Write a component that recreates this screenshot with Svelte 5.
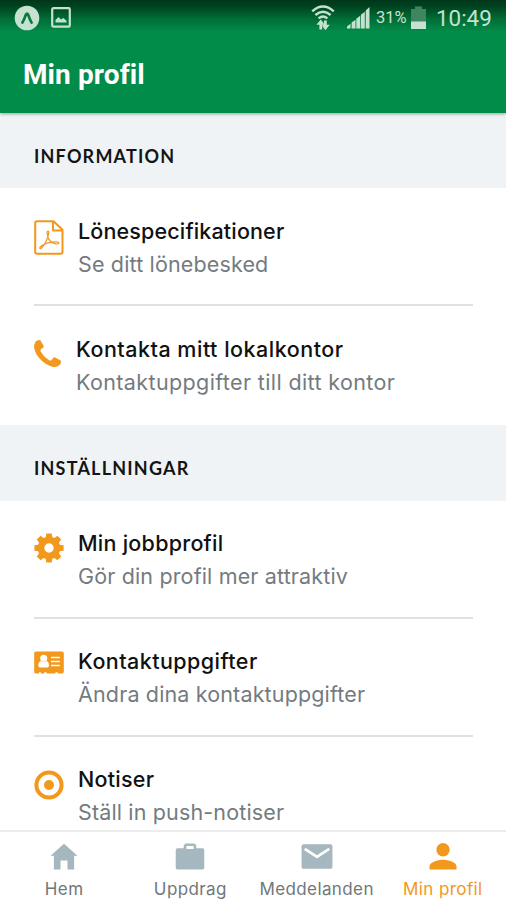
<script lang="ts">
  type Item = { icon: string; title: string; text: string };

  const sections: { heading: string; items: Item[] }[] = [
    {
      heading: 'INFORMATION',
      items: [
        { icon: 'pdf', title: 'Lönespecifikationer', text: 'Se ditt lönebesked' },
        { icon: 'phone', title: 'Kontakta mitt lokalkontor', text: 'Kontaktuppgifter till ditt kontor' },
      ],
    },
    {
      heading: 'INSTÄLLNINGAR',
      items: [
        { icon: 'cog', title: 'Min jobbprofil', text: 'Gör din profil mer attraktiv' },
        { icon: 'card', title: 'Kontaktuppgifter', text: 'Ändra dina kontaktuppgifter' },
        { icon: 'target', title: 'Notiser', text: 'Ställ in push-notiser' },
      ],
    },
  ];

  const tabs = [
    { id: 'home', label: 'Hem' },
    { id: 'jobs', label: 'Uppdrag' },
    { id: 'messages', label: 'Meddelanden' },
    { id: 'profile', label: 'Min profil' },
  ];

  let active = $state('profile');

  // eight teeth, one every 45 degrees
  const teeth = [0, 45, 90, 135, 180, 225, 270, 315];
</script>

<div class="app">
  <header>
    <div class="status">
      <svg class="expo" width="26" height="26" viewBox="0 0 26 26">
        <circle cx="13" cy="13" r="12.300" fill="#c5e2d0" />
        <path d="M8.400 17.600C10 15 11 12.200 12 9.400Q13 7.700 14 9.400C15 12.200 16 15 17.600 17.600" fill="none" stroke="#087a40" stroke-width="2.700" stroke-linecap="round" />
      </svg>
      <svg class="photo" width="20" height="21" viewBox="0 0 20 21">
        <rect x="1.200" y="1.200" width="17.600" height="18.400" rx="1.200" fill="none" stroke="#c5e2d0" stroke-width="2.200" />
        <path d="M4.500 15.500v-2.500l3-3 2.500 2.500 2.300-1.500 3.200 2.800v1.700z" fill="#c5e2d0" />
      </svg>
      <span class="spacer"></span>
      <svg class="wifi" width="24" height="27" viewBox="0 0 24 27" fill="none" stroke="#c5e2d0">
        <path d="M1.200 7.400Q12-2.200 22.800 7.400M4.400 11Q12 4.400 19.600 11M7.600 14.300Q12 10.600 16.400 14.300" stroke-width="2.400" />
        <path d="M9.800 25.500v-7M14.400 16.500v7" stroke-width="2.800" />
        <path d="M5.400 20.800l4.400-5.300 3 3.800v1.500zM18.800 20.800l-4.400 5.400-3-3.900v-1.500z" fill="#c5e2d0" stroke="none" />
      </svg>
      <svg class="signal" width="23" height="23" viewBox="0 0 23 23" fill="#c5e2d0">
        <path d="M0 22.500v-2l3.500-2.700v4.700zM4.600 22.500v-6l3.900-2.800v8.800zM9.300 22.500v-9.800l3.900-3v12.800zM13.900 22.500V8.700l3.900-3v16.800zM18.700 22.500V4.500L22.500 1v21.500z" />
      </svg>
      <span class="percent">31%</span>
      <svg class="battery" width="15" height="23" viewBox="0 0 15 23">
        <path d="M4 0.500h7v2.500h4V23H0V3h4z" fill="#3f8660" />
        <path d="M0 15.500h15V23H0z" fill="#c5e2d0" />
      </svg>
      <span class="clock">10:49</span>
    </div>
    <h1>Min profil</h1>
  </header>

  <main>
    {#each sections as section}
      <section>
        <h2>{section.heading}</h2>
        <ul>
          {#each section.items as item}
            <li class={item.icon}>
              <div class="icon">
                {#if item.icon === 'pdf'}
                  <svg width="30" height="35" viewBox="0 0 30 35" fill="none" stroke="#f2981c" stroke-linejoin="round">
                    <path d="M3 1.200h16.500l9 8.500V32q0 1.700-1.700 1.700H3Q1.200 33.700 1.200 32V3Q1.200 1.200 3 1.200z" stroke-width="2" />
                    <path d="M19 1.500v9h9.500" stroke-width="2" />
                    <path d="M14.200 11c-1.600 0-1.200 2.700-.3 6 .9 3 3 5.200 6.200 6.400 2.600.9 4.800.8 4.800-.3 0-1.400-3.800-1.600-8-.8-4.200.7-8.800 2.400-10.600 4.600-1.200 1.500-.2 2.300 1.100 1.100 2.300-2.100 4.800-6.500 6.200-10.500.9-3 1.700-6.500.6-6.500z" stroke-width="1.200" />
                  </svg>
                {:else if item.icon === 'phone'}
                  <svg width="27" height="27" viewBox="0 0 1408 1408">
                    <path fill="#f2981c" d="M1408 1112q0 27-10 70.500T1377 1251q-21 50-122 106-94 51-186 51-27 0-53-3.500t-57.500-12.500-47-14.500T856 1357t-49-18q-98-35-175-83-127-79-264-216T152 776q-48-77-83-175-3-9-18-49t-20.500-55.500T16 449.500 3.500 392 0 339q0-92 51-186Q107 52 157 31q25-11 68.500-21T296 0q14 0 21 3 18 6 53 76 11 19 30 54t35 63.500 31 53.500q3 4 17.500 25t21.500 35.500 7 28.500q0 20-28.500 50t-62 55-62 53-28.500 46q0 9 5 22.500t8.500 20.500 14 24 11.500 19q76 137 174 235t235 174q2 1 19 11.500t24 14 20.500 8.500 22.500 5q18 0 46-28.500t53-62 55-62 50-28.500q14 0 28.500 7t35.500 21.500 25 17.500q25 15 53.500 31t63.500 35 54 30q70 35 76 53 3 7 3 21z" />
                  </svg>
                {:else if item.icon === 'cog'}
                  <svg width="30" height="30" viewBox="-15 -15 30 30">
                    {#each teeth as angle}
                      <path d="M-3.600-8L-2.700-14.600H2.700L3.600-8z" fill="#f2981c" transform="rotate({angle})" />
                    {/each}
                    <circle r="8" fill="none" stroke="#f2981c" stroke-width="6.600" />
                  </svg>
                {:else if item.icon === 'card'}
                  <svg width="30" height="23" viewBox="0 0 30 23">
                    <path d="M2 .5h26q1.800 0 1.800 1.800v18.400q0 1.800-1.800 1.800h-4.200v-1.200h-2.300v1.200H12.500v-1.200h-2.300v1.200H6.900v-1.200H5v1.200H2Q.2 22.500.2 20.700V2.300Q.2.500 2 .500z" fill="#f2981c" />
                    <circle cx="9.700" cy="7.300" r="3.500" fill="#fff" />
                    <path d="M7 10q2.700 2 5.400 0 2.600.8 2.600 4.700 0 1.800-1.500 1.800H6q-1.700 0-1.700-1.800Q4.300 10.800 7 10z" fill="#fff" />
                    <path d="M17 6.600h8.800M17 10.600h8.800M17 14.600h8.800" stroke="#fff" stroke-width="1.500" />
                  </svg>
                {:else}
                  <svg width="30" height="30" viewBox="0 0 30 30">
                    <circle cx="15" cy="15" r="12.600" fill="none" stroke="#f2981c" stroke-width="4" />
                    <circle cx="15" cy="15" r="5" fill="#f2981c" />
                  </svg>
                {/if}
              </div>
              <div class="copy">
                <h3>{item.title}</h3>
                <p>{item.text}</p>
              </div>
            </li>
          {/each}
        </ul>
      </section>
    {/each}
  </main>

  <nav>
    {#each tabs as tab}
      <button class:active={active === tab.id} onclick={() => (active = tab.id)}>
        {#if tab.id === 'home'}
          <svg width="28" height="28" viewBox="0 0 28 28" fill="currentColor">
            <path d="M14 .8l14 12.500h-3.500V27.500h-6.900v-9.300h-7.200v9.300H3.500V13.300H0z" />
          </svg>
        {:else if tab.id === 'jobs'}
          <svg width="30" height="28" viewBox="0 0 30 28" fill="currentColor">
            <path fill-rule="evenodd" d="M8.500 5.500V2.300L10.300.5h9.400l1.800 1.800v3.200H28q1.800 0 1.800 1.800v18.400q0 1.800-1.800 1.800H2Q.2 27.500.2 25.700V7.300Q.2 5.500 2 5.500zM11.300 6.200h7.400V3h-7.400z" />
          </svg>
        {:else if tab.id === 'messages'}
          <svg width="32" height="28" viewBox="0 0 32 28" fill="currentColor">
            <rect y="1.300" width="32" height="25.500" rx="2" />
            <path d="M3.300 6L16 14.500 28.700 6" fill="none" stroke="#fff" stroke-width="2.800" />
          </svg>
        {:else}
          <svg width="28" height="28" viewBox="0 0 28 28" fill="currentColor">
            <circle cx="14" cy="7" r="6.900" />
            <path d="M0 27.500v-3.200c0-4.600 8.500-7 14-7s14 2.400 14 7v3.200z" />
          </svg>
        {/if}
        <span>{tab.label}</span>
      </button>
    {/each}
  </nav>
</div>

<style>
  :global(body) {
    margin: 0;
  }

  .app {
    display: flex;
    flex-direction: column;
    width: 506px;
    height: 900px;
    overflow: hidden;
    background: #fff;
    font-family: Inter, 'Liberation Sans', sans-serif;
  }

  header {
    flex: none;
    height: 113px;
    background: linear-gradient(#00361b 0, #00421f 6px, #007038 20px, #028c4a 32px);
    box-shadow: 0 1px 3px rgba(0, 0, 0, 0.35);
    z-index: 1;
    font-family: Roboto, sans-serif;
  }

  .status {
    display: flex;
    align-items: center;
    box-sizing: border-box;
    height: 35px;
    padding: 0 15px 0 14px;
    color: #c5e2d0;
  }

  .photo {
    margin-left: 11px;
  }

  .spacer {
    flex: 1;
  }

  .signal {
    margin-left: 12px;
  }

  .percent {
    width: 31px;
    margin-left: 6px;
    font-size: 16.5px;
    line-height: 36px;
    white-space: nowrap;
  }

  .battery {
    margin-left: 4px;
  }

  .clock {
    width: 55px;
    margin-left: 10px;
    font-size: 22.4px;
    line-height: 36px;
    white-space: nowrap;
  }

  h1 {
    margin: 22px 0 0 23px;
    color: #fff;
    font-size: 28px;
    font-weight: 700;
    line-height: 36px;
    letter-spacing: 0.1px;
  }

  main {
    flex: 1;
    min-height: 0;
    overflow: hidden;
  }

  h2 {
    box-sizing: border-box;
    height: 75px;
    margin: 0;
    padding: 6px 34px 0;
    background: #eff3f6;
    color: #141414;
    font-family: Lato, sans-serif;
    font-size: 18px;
    font-weight: 700;
    line-height: 75px;
    letter-spacing: 1.2px;
  }

  section + section h2 {
    height: 76px;
  }

  ul {
    margin: 0;
    padding: 0;
    list-style: none;
  }

  li {
    display: flex;
    box-sizing: border-box;
    height: 118px;
    margin: 0 33px 0 34px;
    padding-top: 28px;
    border-bottom: 2px solid #dfe2e4;
  }

  section + section li {
    padding-top: 27px;
  }

  li:last-child {
    height: 119px;
    border-bottom: 0;
  }

  .icon {
    flex: none;
    width: 30px;
    margin-right: 14px;
    padding-top: 4px;
  }

  .phone .icon {
    width: 28px;
    padding-top: 6px;
  }

  .cog .icon,
  .card .icon {
    padding-top: 5px;
  }

  .target .icon {
    padding-top: 6px;
  }

  .icon svg {
    display: block;
  }

  .copy {
    white-space: nowrap;
  }

  h3 {
    margin: 0;
    color: #111;
    font-size: 21.5px;
    font-weight: 500;
    line-height: 30px;
    letter-spacing: 0.25px;
  }

  p {
    margin: 3px 0 0;
    color: #747b80;
    font-size: 21.5px;
    line-height: 30px;
    letter-spacing: 0.15px;
  }

  .pdf h3 {
    letter-spacing: 0.15px;
  }

  .phone h3 {
    letter-spacing: 0.5px;
  }

  .phone p {
    letter-spacing: 0.38px;
  }

  .card h3 {
    letter-spacing: 0.45px;
  }

  nav {
    display: flex;
    flex: none;
    box-sizing: border-box;
    height: 70px;
    padding-left: 1px;
    border-top: 2px solid #ececec;
    background: #fff;
  }

  button {
    display: flex;
    flex: 1 1 0;
    flex-direction: column;
    align-items: center;
    min-width: 0;
    padding: 11px 0 0;
    border: 0;
    background: none;
    color: #a5b7bf;
    font-family: inherit;
  }

  button span {
    margin-top: 8px;
    color: #70777b;
    font-size: 17px;
    line-height: 22px;
    letter-spacing: 0.4px;
    white-space: nowrap;
  }

  button.active,
  button.active span {
    color: #f2981c;
  }
</style>
